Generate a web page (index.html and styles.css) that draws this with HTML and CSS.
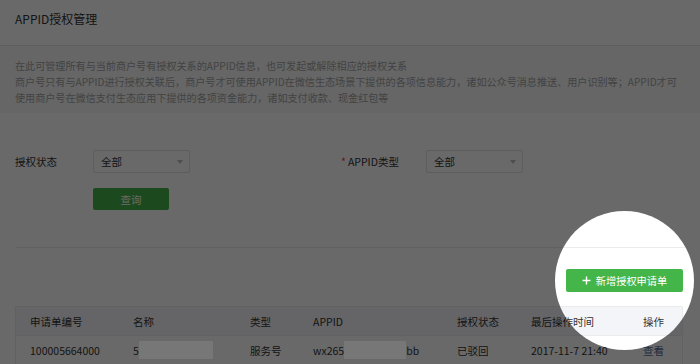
FILE: index.html
```html
<!DOCTYPE html>
<html lang="zh-CN">
<head>
<meta charset="utf-8">
<title>APPID授权管理</title>
<link rel="stylesheet" href="styles.css">
</head>
<body>
<div class="page">
  <div class="head">APPID授权管理</div>
  <div class="desc">
    <div class="line">在此可管理所有与当前商户号有授权关系的APPID信息，也可发起或解除相应的授权关系</div>
    <div class="line">商户号只有与APPID进行授权关联后，商户号才可使用APPID在微信生态场景下提供的各项信息能力，诸如公众号消息推送、用户识别等；APPID才可</div>
    <div class="line">使用商户号在微信支付生态应用下提供的各项资金能力，诸如支付收款、现金红包等</div>
  </div>
  <div class="form">
    <div class="row">
      <div class="item">
        <span class="label">授权状态</span>
        <div class="select"><span>全部</span><i class="caret"></i></div>
      </div>
      <div class="item">
        <span class="label"><span class="req">*</span>APPID类型</span>
        <div class="select"><span>全部</span><i class="caret"></i></div>
      </div>
    </div>
    <div class="btn-query">查询</div>
  </div>
  <div class="sep"></div>
  <div class="toolbar">
    <div class="btn-new">
      <svg class="plus" width="9" height="9" viewBox="0 0 9 9"><path d="M4.5 0.5V8.5M0.5 4.5H8.5" stroke="#fff" stroke-width="1.4" fill="none"/></svg>
      <span>新增授权申请单</span>
    </div>
  </div>
  <div class="table">
    <div class="tr th">
      <div class="td">申请单编号</div>
      <div class="td">名称</div>
      <div class="td">类型</div>
      <div class="td">APPID</div>
      <div class="td">授权状态</div>
      <div class="td">最后操作时间</div>
      <div class="td">操作</div>
    </div>
    <div class="tr">
      <div class="td">100005664000</div>
      <div class="td">5<span class="blur b1"></span></div>
      <div class="td">服务号</div>
      <div class="td">wx265<span class="blur b2"></span>bb</div>
      <div class="td">已驳回</div>
      <div class="td">2017-11-7 21:40</div>
      <div class="td"><span class="link">查看</span></div>
    </div>
  </div>
  <div class="mask"></div>
</div>
</body>
</html>
```
FILE: styles.css
```css
* { box-sizing: border-box; }
body {
  margin: 0;
  background: #fff;
  font-family: "Noto Sans CJK SC", "Liberation Sans", sans-serif;
  font-size: 10.5px;
  color: #333;
}
.page {
  position: relative;
  width: 700px;
  height: 364px;
  overflow: hidden;
  background: #fff;
}
.head {
  height: 46px;
  padding: 10px 15px 0;
  line-height: 18px;
  font-size: 12px;
  color: #333;
  border-bottom: 1px solid #e4e4e4;
}
.desc {
  background: #f7f7f7;
  padding: 12px 15px 7px;
  color: #a3a3a3;
  line-height: 16px;
  font-size: 10.1px;
}
.line { white-space: nowrap; }
.form { padding: 37px 15px 0; }
.row { display: flex; height: 23px; align-items: center; }
.item { display: flex; align-items: center; width: 333px; }
.label { width: 78px; color: #333; }
.req { color: #e64340; margin-left: -7px; margin-right: 2px; }
.select {
  width: 97px;
  height: 23px;
  border: 1px solid #e3e3e3;
  border-radius: 2px;
  display: flex;
  align-items: center;
  justify-content: space-between;
  padding: 0 6px 0 7px;
  color: #333;
}
.caret {
  width: 0;
  height: 0;
  border-left: 3.5px solid transparent;
  border-right: 3.5px solid transparent;
  border-top: 4px solid #bdbdbd;
}
.btn-query {
  margin: 15px 0 0 78px;
  width: 76px;
  height: 22px;
  background: #44b549;
  color: #fff;
  border-radius: 2px;
  display: flex;
  align-items: center;
  justify-content: center;
}
.sep { margin: 37px 15px 0; border-top: 1px solid #ececec; }
.toolbar { display: flex; justify-content: flex-end; padding: 21px 17px 0 0; }
.btn-new {
  width: 117px;
  height: 23px;
  background: #44b549;
  color: #fff;
  border-radius: 2px;
  display: flex;
  align-items: center;
  justify-content: center;
  gap: 5px;
  font-size: 10.2px;
}
.table {
  margin: 14px 17px 0 15px;
  border: 1px solid #ebebeb;
}
.tr {
  display: grid;
  grid-template-columns: 103px 117px 63px 144px 74px 112px 1fr;
  height: 29px;
  align-items: center;
  border-bottom: 1px solid #ebebeb;
  background: #fff;
}
.th { background: #f4f5f9; }
.td { padding-left: 14px; white-space: nowrap; display: flex; align-items: center; }
.blur {
  display: inline-block;
  height: 18px;
  background: #777;
  position: relative;
  z-index: 20;
}
.b1 { width: 74px; margin-left: 0; }
.b2 { width: 62px; }
.link { color: #576b95; }
.mask {
  position: absolute;
  left: 555px;
  top: 211px;
  width: 139px;
  height: 139px;
  border-radius: 50%;
  box-shadow: 0 0 0 900px rgba(0, 0, 0, 0.59);
  z-index: 10;
  pointer-events: none;
}
```
